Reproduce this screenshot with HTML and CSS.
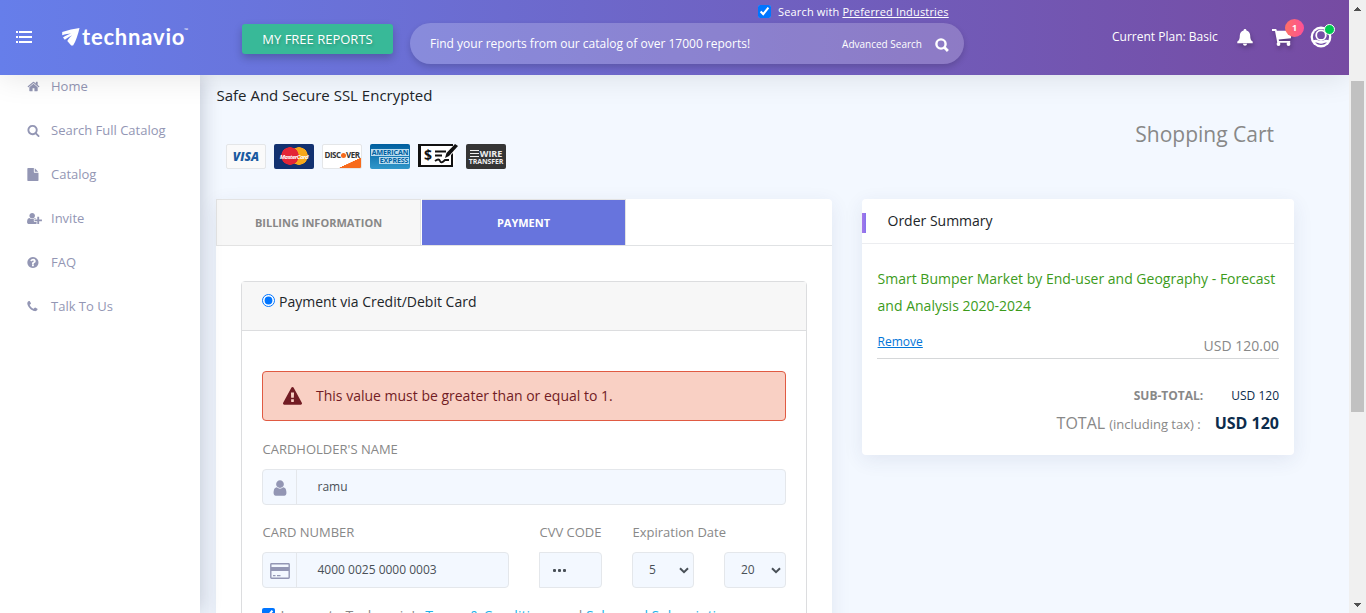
FILE: index.html
```html
<!DOCTYPE html>
<html lang="en">
<head>
<meta charset="utf-8">
<title>Technavio - Shopping Cart</title>
<link rel="stylesheet" href="styles.css">
</head>
<body>
<div class="screen">
  <div class="app">
    <header class="topbar">
      <svg class="menu-icon" viewBox="0 0 17 13" width="17" height="13" fill="#fff"><path d="M1 0h2v2H1zM4 0h13v2H4zM1 5h2v2H1zM4 5h13v2H4zM1 10h2v2H1zM4 10h13v2H4z"/></svg>
      <div class="logo">
        <svg viewBox="0 0 18 18" width="18" height="18" fill="#fff"><path d="M17.500 0C12 .8 6 2.200.2 4v3.200c3-.8 6.300-1.500 9-1.700C6.300 6.500 3.300 7.900 1 9.500l1.800 2.300c2.300-1.900 4.900-3.400 7.400-4.500-2 1.700-3.900 3.800-4.900 5.700L9.200 17.500h1.900C13.800 13.500 16.200 6 17.500 0z"/></svg>
        <span class="logo-name">technavio</span><span class="logo-tm">™</span>
      </div>
      <button class="free-btn">MY FREE REPORTS</button>
      <div class="search">
        <label class="preferred"><input type="checkbox" checked><span>Search with <u>Preferred Industries</u></span></label>
        <div class="search-bar">
          <span class="search-hint">Find your reports from our catalog of over 17000 reports!</span>
          <span class="advanced">Advanced Search</span>
          <svg viewBox="0 0 14 14" width="14" height="14" fill="none" stroke="#fff"><circle cx="6" cy="6" r="4.600" stroke-width="2.400"/><path d="m9.300 9.300 3.600 3.600" stroke-width="2.800"/></svg>
        </div>
      </div>
      <span class="plan">Current Plan: Basic</span>
      <svg class="bell" viewBox="0 0 16 17" width="16" height="17" fill="#fff"><path d="M8 0c.9 0 1.400.6 1.400 1.400C12 2 13.200 4.200 13.200 6.600c0 3.600.8 5 2.500 6v1.600H.3v-1.600c1.700-1 2.500-2.400 2.500-6C2.800 4.200 4 2 6.600 1.400 6.600.6 7.100 0 8 0zM6 14.800h4c0 1.300-.9 2-2 2s-2-.7-2-2z"/></svg>
      <div class="cart">
        <svg viewBox="0 0 20 17" width="20" height="17" fill="#fff"><path d="M0 0h4.200l.7 1.800H19v7.400L6.700 10.500l.3 1.400h11.200v1.900H5.300L3 1.900H0z"/><circle cx="6.500" cy="15" r="1.900"/><circle cx="16.500" cy="15" r="1.900"/></svg>
        <span class="badge">1</span>
      </div>
      <div class="avatar">
        <svg viewBox="0 0 22 22" width="22" height="22"><circle cx="11" cy="11" r="10.400" fill="#fff"/><circle cx="11" cy="11" r="8.100" fill="#754fa6"/><path d="M2.500 14.800c2-1.200 4.200-1.200 6-.3 1.600.8 3.400.8 5 0 1.800-.9 4-.9 6 .3l-1.300 2.600c-1.600-1.200-3-1-4.200-.4-1.900.9-4.100.9-6 0-1.200-.6-2.600-.8-4.200.4z" fill="#fff"/><circle cx="11" cy="9.200" r="4.800" fill="#754fa6" stroke="#fff" stroke-width="1.800"/></svg>
        <span class="online"></span>
      </div>
    </header>

    <div class="body">
      <nav class="sidebar">
        <a class="nav-item"><svg viewBox="0 0 1792 1792"><path d="M1472 992v480q0 26-19 45t-45 19h-384v-384h-256v384h-384q-26 0-45-19t-19-45v-480q0-1 .5-3t.5-3l575-474 575 474q1 2 1 6zm223-69l-62 74q-8 9-21 11h-3q-13 0-21-7l-692-577-692 577q-12 8-24 7-13-2-21-11l-62-74q-8-10-7-23.500t11-21.500l719-599q32-26 76-26t76 26l244 204v-195q0-14 9-23t23-9h192q14 0 23 9t9 23v408l219 182q10 8 11 21.500t-7 23.500z"/></svg>Home</a>
        <a class="nav-item"><svg viewBox="0 0 1792 1792"><path d="M1216 832q0-185-131.500-316.500t-316.500-131.500-316.500 131.500-131.500 316.500 131.500 316.500 316.500 131.500 316.500-131.500 131.500-316.500zm512 832q0 52-38 90t-90 38q-54 0-90-38l-343-342q-179 124-399 124-143 0-273.500-55.500t-225-150-150-225-55.500-273.500 55.500-273.500 150-225 225-150 273.500-55.500 273.500 55.500 225 150 150 225 55.500 273.500q0 220-124 399l343 343q37 37 37 90z"/></svg>Search Full Catalog</a>
        <a class="nav-item"><svg viewBox="80 0 1792 1792"><path d="M1152 512v-472q22 14 36 28l408 408q14 14 28 36h-472zm-128 32q0 40 28 68t68 28h544v1056q0 40-28 68t-68 28h-1344q-40 0-68-28t-28-68v-1600q0-40 28-68t68-28h800v544z"/></svg>Catalog</a>
        <a class="nav-item"><svg viewBox="0 0 2048 1792" class="wide"><path d="M704 896q-159 0-271.500-112.500t-112.500-271.500 112.500-271.500 271.500-112.500 271.500 112.500 112.500 271.500-112.500 271.500-271.500 112.500zm960 128h352q13 0 22.500 9.500t9.500 22.500v192q0 13-9.500 22.500t-22.500 9.500h-352v352q0 13-9.500 22.500t-22.500 9.500h-192q-13 0-22.500-9.500t-9.500-22.500v-352h-352q-13 0-22.500-9.500t-9.500-22.500v-192q0-13 9.500-22.500t22.500-9.500h352v-352q0-13 9.500-22.500t22.500-9.500h192q13 0 22.500 9.500t9.500 22.500v352zm-736 224q0 52 38 90t90 38h256v238q-68 50-171 50h-874q-121 0-194-69t-73-190q0-53 3.500-103.500t14-109 26.500-108.500 43-97.500 62-81 85.500-53.500 111.500-20q19 0 39 17 79 61 154.500 91.500t164.500 30.500 164.500-30.500 154.500-91.500q20-17 39-17 132 0 217 96h-223q-52 0-90 38t-38 90v192z"/></svg>Invite</a>
        <a class="nav-item"><svg viewBox="80 0 1792 1792"><path d="M1024 1376v-192q0-14-9-23t-23-9h-192q-14 0-23 9t-9 23v192q0 14 9 23t23 9h192q14 0 23-9t9-23zm256-672q0-88-55.500-163t-138.500-116-170-41q-243 0-371 213-15 24 8 42l132 100q7 6 19 6 16 0 25-12 53-68 86-92 34-24 86-24 48 0 85.500 26t37.500 59q0 38-20 61t-68 45q-63 28-115.500 86.500t-52.500 125.500v36q0 14 9 23t23 9h192q14 0 23-9t9-23q0-19 21.500-49.500t54.500-49.500q32-18 49-28.500t46-35 44.500-48 28-60.500 12.500-81zm384 192q0 209-103 385.500t-279.500 279.500-385.500 103-385.500-103-279.500-279.500-103-385.500 103-385.500 279.500-279.500 385.500-103 385.500 103 279.500 279.500 103 385.500z"/></svg>FAQ</a>
        <a class="nav-item"><svg viewBox="150 0 1792 1792"><path d="M1600 1240q0 27-10 70.500t-21 68.500q-21 50-122 106-94 51-186 51-27 0-53-3.500t-57.500-12.500-47-14.500-55.500-20.500-49-18q-98-35-175-83-127-79-264-216t-216-264q-48-77-83-175-3-9-18-49t-20.500-55.500-14.500-47-12.500-57.500-3.500-53q0-92 51-186 56-101 106-122 25-11 68.500-21t70.500-10q14 0 21 3 18 6 53 76 11 19 30 54t35 63.500 31 53.500q3 4 17.500 25t21.500 35.500 7 28.500q0 20-28.500 50t-62 55-62 53-28.500 46q0 9 5 22.500t8.500 20.500 14 24 11.500 19q76 137 174 235t235 174q2 1 19 11.500t24 14 20.500 8.500 22.500 5q18 0 46-28.500t53-62 55-62 50-28.500q14 0 28.500 7t35.500 21.500 25 17.500q25 15 53.500 31t63.500 35 54 30q70 35 76 53 3 7 3 21z"/></svg>Talk To Us</a>
      </nav>

      <main class="content">
        <section class="left">
          <p class="secure">Safe And Secure SSL Encrypted</p>
          <div class="methods">
            <span class="method visa">VISA</span>
            <span class="method master"><span>MasterCard</span></span>
            <span class="method discover">DISC<i></i>VER</span>
            <span class="method amex"><span>AMERICAN</span><span class="amex-b">EXPRESS</span></span>
            <svg class="check" viewBox="0 0 40 25" width="40" height="25"><path d="M3 2h34v19H3z" fill="#fff"/><path d="M0 0h35v2H3v19h30V11l2-2v14H0z" fill="#111"/><text x="6" y="16" class="check-sign">$</text><path d="M17 7.500h11M17 11.500h7M17 17q4-3 5 0t5-1h4" stroke="#111" stroke-width="1.800" fill="none"/><path d="m27 14 1.500-5L37 0l3 2-9 10z" fill="#111"/></svg>
            <span class="method wire"><span class="wire-top"><i></i>WIRE</span><span>TRANSFER</span></span>
          </div>

          <div class="checkout">
            <div class="tabs">
              <div class="tab">BILLING INFORMATION</div>
              <div class="tab active">PAYMENT</div>
            </div>
            <div class="panel">
              <label class="panel-head"><input type="radio" checked><span>Payment via Credit/Debit Card</span></label>
              <div class="panel-body">
                <div class="alert">
                  <svg viewBox="0 0 1792 1792" width="19" height="19" fill="#721c24"><path d="M1024 1375v-190q0-14-9.500-23.500t-22.500-9.500h-192q-13 0-22.500 9.500t-9.500 23.500v190q0 14 9.500 23.500t22.500 9.500h192q13 0 22.500-9.500t9.500-23.500zm-2-374l18-459q0-12-10-19-13-11-24-11h-220q-11 0-24 11-10 7-10 21l17 457q0 10 10 16.500t24 6.500h185q14 0 23.500-6.500t10.500-16.500zm-14-934l768 1408q35 63-2 126-17 29-46.500 46t-63.500 17h-1536q-34 0-63.500-17t-46.500-46q-37-63-2-126l768-1408q17-31 47-49t65-18 65 18 47 49z"/></svg>
                  <span>This value must be greater than or equal to 1.</span>
                </div>
                <div class="field">
                  <span class="label">CARDHOLDER'S NAME</span>
                  <div class="control">
                    <span class="addon"><svg viewBox="0 0 1792 1792" width="18" height="18" fill="#9396b4"><path d="M1536 1399q0 109-62.500 187t-150.500 78h-854q-88 0-150.500-78t-62.500-187q0-85 8.500-160.500t31.500-152 58.500-131 94-89 134.500-34.500q131 128 313 128t313-128q76 0 134.500 34.500t94 89 58.500 131 31.500 152 8.500 160.500zm-256-887q0 159-112.500 271.500t-271.500 112.500-271.500-112.500-112.500-271.500 112.500-271.500 271.500-112.500 271.500 112.500 112.500 271.500z"/></svg></span>
                    <span class="value">ramu</span>
                  </div>
                </div>
                <div class="field-row">
                  <div class="field number">
                    <span class="label">CARD NUMBER</span>
                    <div class="control">
                      <span class="addon"><svg viewBox="0 0 20 16" width="20" height="16"><path d="M1.500.8h17q.7 0 .7.700v13q0 .7-.7.700h-17q-.7 0-.7-.7v-13q0-.7.7-.7z" fill="none" stroke="#9396b4" stroke-width="1.400"/><path d="M1 4h18v4H1zM3 12h2.500v1.300H3zM7 12h3.500v1.300H7z" fill="#9396b4"/></svg></span>
                      <span class="value">4000 0025 0000 0003</span>
                    </div>
                  </div>
                  <div class="field cvv">
                    <span class="label">CVV CODE</span>
                    <div class="control square"><span class="dots"><i></i><i></i><i></i></span></div>
                  </div>
                  <div class="field expiry">
                    <span class="label">Expiration Date</span>
                    <div class="selects">
                      <div class="control select"><span>5</span><svg viewBox="0 0 10 7" width="10" height="7"><path d="m1 1.200 4 4 4-4" fill="none" stroke="#495057" stroke-width="2"/></svg></div>
                      <div class="control select"><span>20</span><svg viewBox="0 0 10 7" width="10" height="7"><path d="m1 1.200 4 4 4-4" fill="none" stroke="#495057" stroke-width="2"/></svg></div>
                    </div>
                  </div>
                </div>
                <label class="terms"><input type="checkbox" checked><span>I agree to Technavio's <a>Terms &amp; Conditions</a> and <a>Sales and Subscription</a></span></label>
              </div>
            </div>
          </div>
        </section>

        <section class="right">
          <h1 class="title"><span>Shopping Cart</span></h1>
          <div class="summary">
            <div class="summary-head"><i class="accent"></i><span>Order Summary</span></div>
            <div class="summary-body">
              <p class="product">Smart Bumper Market by End-user and Geography - Forecast<br>and Analysis 2020-2024</p>
              <div class="line"><a class="remove">Remove</a><span class="price">USD 120.00</span></div>
              <div class="subtotal"><b>SUB-TOTAL:</b><span>USD 120</span></div>
              <div class="total"><span>TOTAL</span><span class="tax">(including tax) :</span><b>USD 120</b></div>
            </div>
          </div>
        </section>
      </main>
    </div>
  </div>
  <div class="scrollbar">
    <svg viewBox="0 0 7 4" width="7" height="4"><path d="M3 0h1v1h1v1h1v1h1v1H0V3h1V2h1V1h1z" fill="#505050"/></svg>
    <div class="thumb"></div>
    <svg viewBox="0 0 7 4" width="7" height="4"><path d="M0 0h7v1H6v1H5v1H4v1H3V3H2V2H1V1H0z" fill="#505050"/></svg>
  </div>
</div>
</body>
</html>
```
FILE: styles.css
```css
* { box-sizing: border-box; }
body { margin: 0; overflow: hidden; font: 13px/20px "Open Sans", sans-serif; color: #888; background: #f3f8ff; }
svg { display: block; flex: none; }
p, h1 { margin: 0; font-weight: 400; }
input { margin: 0; flex: none; width: 13px; height: 13px; }
span, a, b, .product { white-space: nowrap; }

.screen { display: flex; width: 1366px; height: 613px; overflow: hidden; }
.app { display: flex; flex-direction: column; width: 1349px; flex: none; height: 613px; overflow: hidden; }

/* Header */
.topbar { display: flex; flex: none; height: 75px; color: #fff; background: linear-gradient(90deg, #667eea 0%, #764ba2 100%); box-shadow: 0 3px 30px rgba(0, 0, 0, .1); position: relative; z-index: 3; }
.menu-icon { margin: 31px 0 0 15px; }
.logo { display: flex; margin: 28px 0 0 30px; width: 129px; height: 22px; }
.logo-name { font: 700 22px/18px Lato, sans-serif; margin-left: 2px; letter-spacing: .8px; }
.logo-tm { font-size: 5px; line-height: 5px; margin-left: -1px; }
.free-btn { margin: 24px 0 0 51px; width: 151px; height: 30px; flex: none; padding: 0; border: 0; border-radius: 3px; background: #38b998; color: #fff; font: 500 13px/30px "Open Sans", sans-serif; box-shadow: 0 4px 8px rgba(0, 0, 0, .22); text-shadow: 1px 2px 3px rgba(0, 0, 0, .2); }
.search { width: 554px; margin-left: 17px; flex: none; }
.preferred { display: flex; height: 23px; padding: 5px 0 0 348px; font-size: 11px; line-height: 14px; font-weight: 500; letter-spacing: .16px; }
.preferred span { margin-left: 7px; }
.search-bar { display: flex; align-items: center; height: 41px; border-radius: 21px; padding: 0 15px 0 20px; background: rgba(255, 255, 255, .2); box-shadow: 0 3px 6px rgba(0, 0, 0, .16); font-weight: 500; }
.search-hint { font-size: 12px; flex: 1; }
.advanced { font-size: 10px; margin-right: 13px; }
.search-bar svg { margin-top: 3px; }
.plan { font-size: 12px; font-weight: 500; margin: 27px 0 0 148px; width: 106px; }
.bell { margin: 29px 0 0 19px; filter: drop-shadow(1px 3px 2px rgba(0, 0, 0, .25)); }
.cart { position: relative; margin: 29px 0 0 19px; }
.cart svg { filter: drop-shadow(1px 3px 2px rgba(0, 0, 0, .25)); }
.badge { position: absolute; left: 13px; top: -10px; width: 19px; height: 18px; border-radius: 50%; background: linear-gradient(90deg, #fe7065, #fe5196); font-size: 9px; line-height: 18px; text-align: center; font-weight: 700; }
.avatar { position: relative; margin: 26px 0 0 18px; }
.online { position: absolute; left: 14px; top: -2px; width: 11px; height: 11px; border-radius: 50%; background: #00c851; border: 1.500px solid #fff; }

/* Sidebar */
.body { display: flex; flex: 1; min-height: 0; }
.sidebar { width: 200px; flex: none; background: #fff; position: relative; z-index: 2; box-shadow: 0 0 20px rgba(0, 20, 50, .24); }
.nav-item { display: flex; align-items: center; height: 44px; padding-left: 27px; gap: 11px; color: #9396b4; }
.nav-item:first-child { margin-top: -11px; }
.nav-item svg { width: 13px; height: 13px; fill: #9396b4; }
.nav-item .wide { width: 15px; margin-right: -2px; }

/* Content */
.content { display: flex; flex: 1; padding-left: 16px; gap: 30px; }
.left { width: 616px; flex: none; }
.secure { font-size: 15px; color: #212529; padding: 10px 0 0 .5px; height: 69px; }
.methods { display: flex; gap: 8px; padding-left: 10px; height: 55px; }
.method { display: flex; width: 40px; height: 25px; border-radius: 2px; align-items: center; justify-content: center; overflow: hidden; font-weight: 700; }
.visa { background: #fafafa; border: 1px solid #e4e6e8; font-size: 12px; font-style: italic; font-weight: 800; color: #1b5ba1; }
.master { background: radial-gradient(circle at 16px 12px, #e32636 8.500px, transparent 9px), radial-gradient(circle at 25px 12px, #f7a81b 8.500px, transparent 9px), #123170; color: #fff; font-size: 6px; font-style: italic; letter-spacing: -.5px; }
.discover { border: 1px solid #e4e6e8; background: linear-gradient(155deg, #fff 74%, #f76b1c 75%); font-size: 8px; letter-spacing: -.5px; color: #333; padding-bottom: 3px; }
.discover i { width: 5px; height: 5px; margin-left: .5px; border-radius: 50%; background: #f76b1c; }
.amex { flex-direction: column; background: linear-gradient(#005f9f, #3197ca); color: #005f9f; font-size: 7px; line-height: 7px; gap: 1px; letter-spacing: -.1px; }
.amex span { background: #b9dcf0; padding: 0 1px; }
.amex .amex-b { margin-left: 8px; }
.check-sign { font: 700 14px "Open Sans", sans-serif; fill: #111; }
.wire { flex-direction: column; background: #353535; color: #eee; font-size: 7px; line-height: 7px; letter-spacing: -.1px; }
.wire-top { display: flex; gap: 1px; font-size: 9px; line-height: 9px; }
.wire-top i { width: 9px; height: 7px; margin-top: 1px; background: repeating-linear-gradient(#eee 0 1px, #353535 1px 3px); }

.checkout { background: #fff; height: 480px; border-radius: 4px; box-shadow: 0 5px 20px rgba(40, 60, 110, .09); }
.tabs { display: flex; height: 47px; border-bottom: 1px solid #e0e2e4; gap: 1px; }
.tab { width: 205px; height: 47px; border: 1px solid #e3e3e3; background: #f7f7f7; font-size: 11px; line-height: 46px; text-align: center; font-weight: 700; color: #888; }
.tab.active { width: 204px; background: #6774dd; color: #fff; border-left-width: 0; }
.panel { margin: 35px 25px 0; border: 1px solid #dcdddf; border-radius: 4px 4px 0 0; height: 420px; }
.panel-head { display: flex; height: 49px; padding: 12px 20px 0; background: #f7f7f7; border-bottom: 1px solid #dcdddf; color: #212529; font-size: 14px; line-height: 15px; }
.panel-head span { margin-left: 4px; }
.panel-body { padding: 40px 20px 0; }
.alert { display: flex; align-items: center; height: 50px; padding-left: 20px; gap: 14px; border: 1px solid #e05a42; border-radius: 4px; background: #f9d0c4; color: #721c24; font-size: 14px; margin-bottom: 18px; }
.label { display: block; height: 30px; font-size: 13px; line-height: 20px; padding-left: .5px; }
.control { display: flex; height: 36px; background: #f3f8ff; border: 1px solid #e4e7eb; border-radius: 4px; color: #495057; }
.addon { display: flex; width: 34px; align-items: center; justify-content: center; border-right: 1px solid #e4e7eb; padding-top: 2px; }
.value { font-size: 12px; line-height: 34px; margin-left: 20.500px; }
.field-row { display: flex; margin-top: 17px; }
.number { width: 247px; }
.cvv { width: 63px; margin-left: 30px; }
.square { border-radius: 0 4px 4px 0; }
.dots { display: flex; align-items: center; gap: 2px; padding-left: 13px; }
.dots i { width: 3px; height: 3px; border-radius: 1px; background: #495057; }
.expiry { margin-left: 30px; width: 154px; }
.selects { display: flex; justify-content: space-between; }
.select { width: 62px; justify-content: space-between; align-items: center; padding: 0 4px 0 16px; font-size: 12px; }
.terms { display: flex; align-items: flex-start; margin-top: 20px; font-size: 14px; line-height: 15px; }
.terms span { margin-left: 5.500px; }
.terms a { color: #1fb3e8; }

/* Order summary */
.right { width: 432px; flex: none; }
.title { height: 124px; padding: 45px 20px 0 0; font-size: 21px; line-height: 28px; text-align: right; }
.summary { height: 256px; background: #fff; border-radius: 4px; box-shadow: 0 5px 20px rgba(40, 60, 110, .09); }
.summary-head { display: flex; height: 45px; border-bottom: 1px solid #ecedf0; color: #212529; font-size: 14px; line-height: 44px; }
.accent { width: 4px; height: 20px; margin: 14px 21.500px 0 0; background: linear-gradient(90deg, #a777e8, #8573ee); }
.summary-body { padding: 21px 15px 0; }
.product { color: #3c9b1b; font-size: 14px; line-height: 27px; height: 68px; padding-left: .6px; }
.line { display: flex; justify-content: space-between; height: 26px; border-bottom: 1px solid #d5d7d9; padding-left: .6px; }
.remove { color: #0275d8; font-size: 12px; line-height: 18px; text-decoration: underline; }
.price { font-size: 14px; line-height: 26px; }
.subtotal { display: flex; justify-content: flex-end; gap: 28px; margin-top: 27px; font-size: 12px; line-height: 20px; }
.subtotal span { color: #0c2c4c; }
.total { display: flex; justify-content: flex-end; align-items: baseline; height: 32px; font-size: 16px; line-height: 34px; }
.total b { color: #0c2c4c; font-size: 16px; margin-left: 14px; }
.tax { font-size: 13px; margin-left: 4px; }

/* Page scrollbar */
.scrollbar { display: flex; flex-direction: column; align-items: center; width: 17px; height: 613px; background: #f0f0f0; padding: 7px 0 6px; }
.thumb { width: 13px; height: 331px; margin: 70px 0 auto; background: #c1c1c1; }
```
